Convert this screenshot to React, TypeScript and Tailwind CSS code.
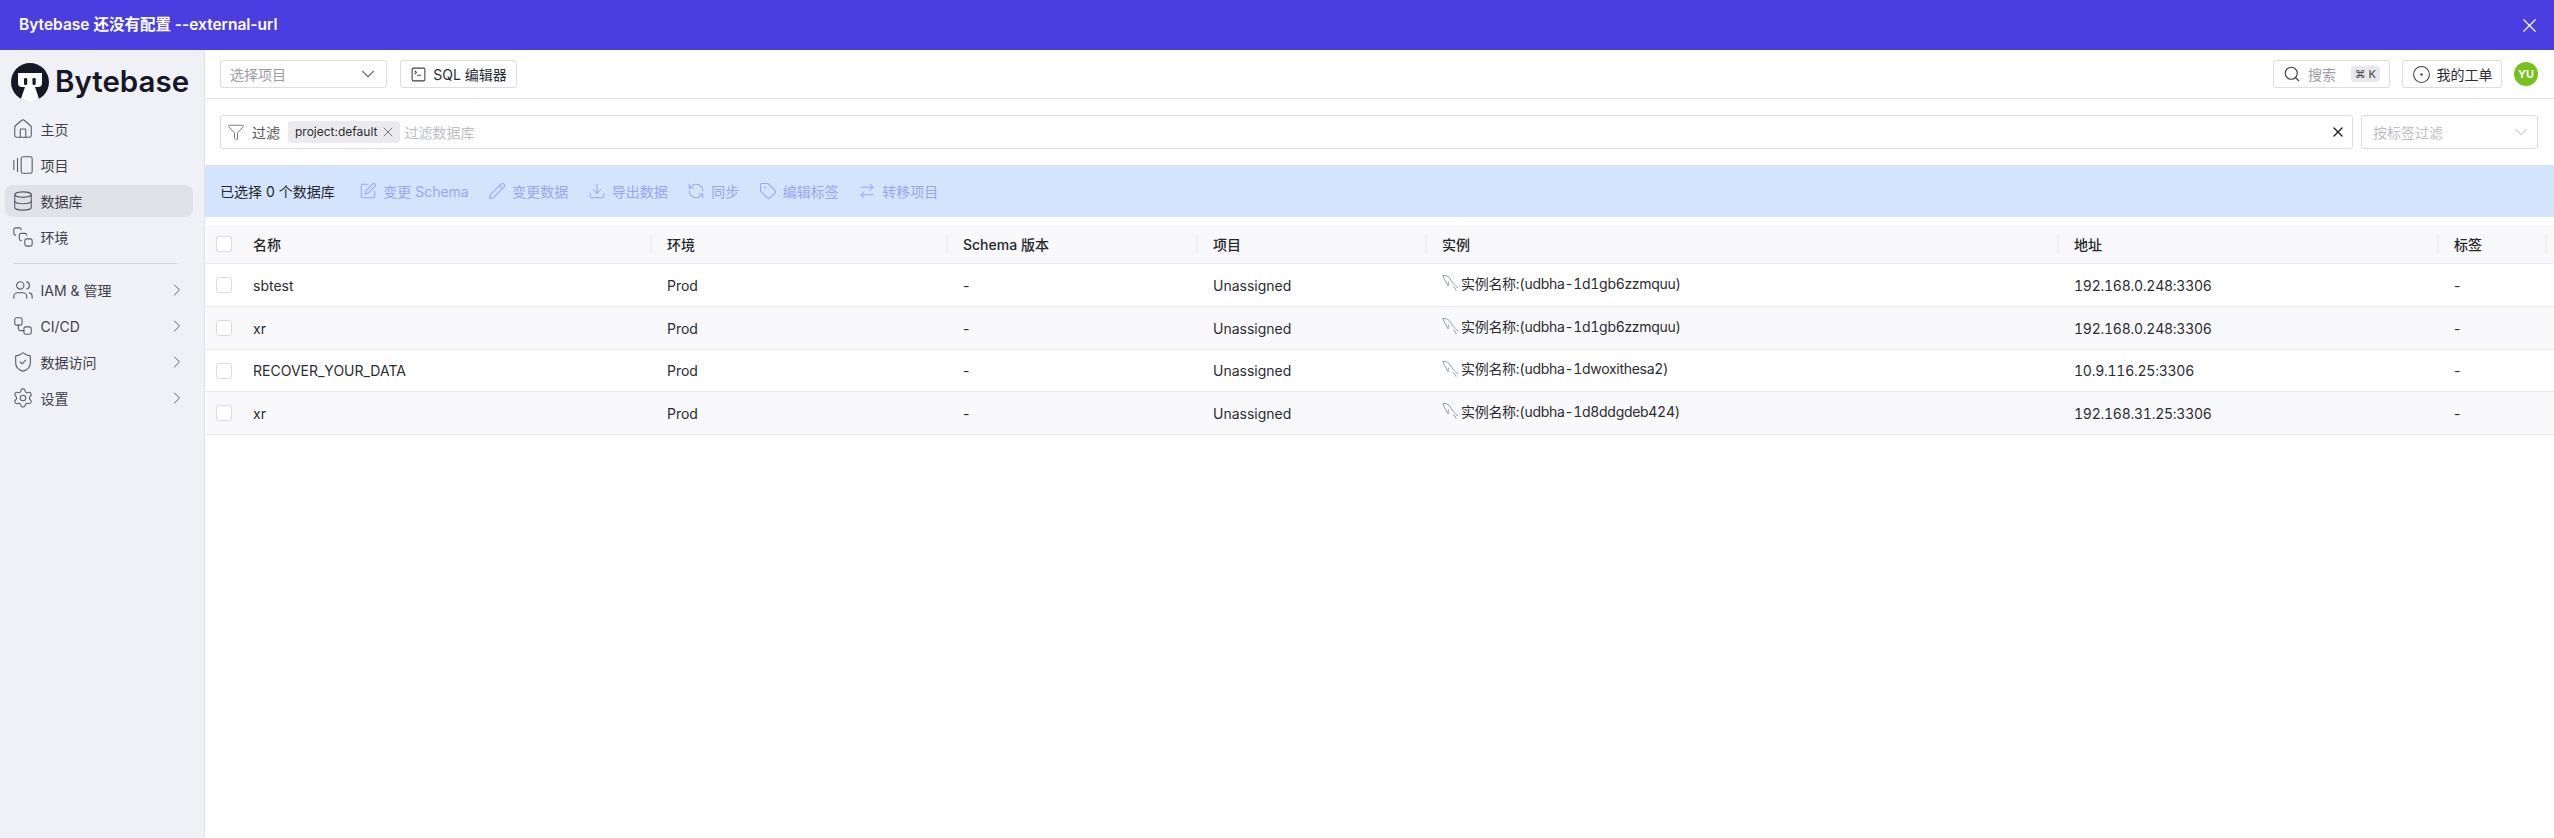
import React from 'react';
import {
    House, GalleryHorizontalEnd, Database, SquareStack, Users, Workflow, ShieldCheck, Settings,
    ChevronRight, ChevronDown, SquareTerminal, Search, CircleDot, Funnel, X, SquarePen, Pencil,
    Download, RefreshCcw, Tag, ArrowRightLeft,
} from 'lucide-react';

const navTop = [
    { label: '主页', icon: House },
    { label: '项目', icon: GalleryHorizontalEnd },
    { label: '数据库', icon: Database, active: true },
    { label: '环境', icon: SquareStack },
];

const navBottom = [
    { label: 'IAM & 管理', icon: Users },
    { label: 'CI/CD', icon: Workflow },
    { label: '数据访问', icon: ShieldCheck },
    { label: '设置', icon: Settings },
];

const actions = [
    { label: '变更 Schema', icon: SquarePen },
    { label: '变更数据', icon: Pencil },
    { label: '导出数据', icon: Download },
    { label: '同步', icon: RefreshCcw },
    { label: '编辑标签', icon: Tag },
    { label: '转移项目', icon: ArrowRightLeft },
];

const rows = [
    { name: 'sbtest', instance: '实例名称:(udbha-1d1gb6zzmquu)', address: '192.168.0.248:3306', h: 'h-[43px]' },
    { name: 'xr', instance: '实例名称:(udbha-1d1gb6zzmquu)', address: '192.168.0.248:3306', h: 'h-[43px]' },
    { name: 'RECOVER_YOUR_DATA', instance: '实例名称:(udbha-1dwoxithesa2)', address: '10.9.116.25:3306', h: 'h-[42px]' },
    { name: 'xr', instance: '实例名称:(udbha-1d8ddgdeb424)', address: '192.168.31.25:3306', h: 'h-[43px]' },
];

const columns = ['名称', '环境', 'Schema 版本', '项目', '实例', '地址', '标签'];

const gridCols = 'grid grid-cols-[33px_414px_296px_250px_229px_632px_380px_108px_7px]';

const Logo = () => (
    <svg viewBox="0 0 38 38" className="w-[38px] h-[38px] shrink-0">
        <circle cx="19" cy="19" r="19" fill="#161827" />
        <path d="M7 10H31V20Q31 24 27 24H24L28 35.800A19 19 0 0 1 10 35.800L14 24H11Q7 24 7 20Z" fill="#fff" />
        <rect x="13" y="15" width="3.200" height="7" rx="1.200" fill="#161827" />
        <rect x="21.500" y="15" width="3.200" height="7" rx="1.200" fill="#161827" />
    </svg>
);

const MysqlIcon = () => (
    <svg viewBox="0 0 18 18" className="w-[18px] h-[18px] shrink-0" fill="none" stroke="#7f9fb3" strokeWidth="1" strokeLinecap="round" strokeLinejoin="round">
        <path d="M1 1.500c2.500-.5 4.500.3 6.200 2.200 1.700 1.900 2.800 4.300 4.300 6 1.100 1.200 2.500 2.600 4.500 4.300" />
        <path d="M1 1.500c.8 3 1.700 4.700 3.200 6.500 .6 2 1.200 3 2 3.800-.2-1.500-.1-2.600 .3-3.800" />
        <path d="M11.500 13c1 .4 2 1.300 2.500 3.500" />
    </svg>
);

const Checkbox = () => <span className="block w-4 h-4 rounded-[3px] border border-[#d9d9e0] bg-white" />;

const App = () => {
    return (
        <div className="h-screen w-full flex flex-col overflow-hidden bg-white text-[14px] text-[#2b2c33] font-['Inter','Noto_Sans_CJK_SC',sans-serif]">
            <div className="h-[50px] shrink-0 bg-[#4a3ee0] text-white flex items-center justify-between pl-[19px] pr-[13px]">
                <span className="text-[15.500px] font-semibold">Bytebase 还没有配置 --external-url</span>
                <X className="w-[23px] h-[23px]" strokeWidth={1.2} />
            </div>

            <div className="flex-1 flex min-h-0">
                <aside className="w-[205px] shrink-0 bg-[#f0f1f6] border-r border-[#e2e3ea]">
                    <div className="h-[54px] mt-[5px] pl-[11px] flex items-center gap-[6px]">
                        <Logo />
                        <span className="text-[29.500px] font-semibold text-[#161827] leading-none">Bytebase</span>
                    </div>
                    <nav className="mt-[4px] pl-[5px] pr-[11px]">
                        {navTop.map((item) => (
                            <div key={item.label} className={`h-[32px] mb-[4px] rounded-lg flex items-center pl-[7px] gap-[6.500px] text-[#3d3f4a] ${item.active ? 'bg-[#e1e2e8]' : ''}`}>
                                <item.icon className="w-[22px] h-[22px] text-[#5a5e6b]" strokeWidth={1.2} />
                                <span>{item.label}</span>
                            </div>
                        ))}
                        <div className="h-px bg-[#d3d4db] mx-[8px] w-[164px] mt-[10px] mb-[10px]" />
                        {navBottom.map((item) => (
                            <div key={item.label} className="h-[32px] mb-[4px] flex items-center pl-[7px] pr-[6px] gap-[6.500px] text-[#3d3f4a]">
                                <item.icon className="w-[22px] h-[22px] text-[#5a5e6b]" strokeWidth={1.2} />
                                <span className="flex-1">{item.label}</span>
                                <ChevronRight className="w-[20px] h-[20px] text-[#5a5e6b]" strokeWidth={1.2} />
                            </div>
                        ))}
                    </nav>
                </aside>

                <main className="flex-1 min-w-0 flex flex-col">
                    <header className="h-[49px] shrink-0 border-b border-[#e2e3ea] flex items-center pl-[15px] pr-[16px]">
                        <div className="w-[167px] h-[28px] rounded-[3px] border border-[#dcdce2] flex items-center justify-between pl-[9px] pr-[7px] text-[#9b9ca3]">
                            <span>选择项目</span>
                            <ChevronDown className="w-[22px] h-[22px] text-[#6b6e78]" strokeWidth={1.2} />
                        </div>
                        <div className="ml-[13px] w-[117px] h-[28px] rounded-[3px] border border-[#dcdce2] flex items-center justify-center gap-[6px]">
                            <SquareTerminal className="w-[17px] h-[17px] text-[#3d3f4a]" strokeWidth={1.5} />
                            <span>SQL 编辑器</span>
                        </div>
                        <div className="ml-auto w-[117px] h-[28px] rounded-[3px] border border-[#dcdce2] flex items-center pl-[9px] pr-[9px]">
                            <Search className="w-[18px] h-[18px] text-[#3d3f4a] mr-[7px]" strokeWidth={1.5} />
                            <span className="text-[#9b9ca3]">搜索</span>
                            <span className="ml-auto h-[16px] w-[29px] rounded-[3px] bg-[#e8e8ec] text-[#55565e] text-[11px] font-medium flex items-center justify-center">⌘ K</span>
                        </div>
                        <div className="ml-[12px] w-[100px] h-[28px] rounded-[3px] border border-[#dcdce2] flex items-center justify-center gap-[6px]">
                            <CircleDot className="w-[19px] h-[19px] text-[#3d3f4a]" strokeWidth={1.3} />
                            <span>我的工单</span>
                        </div>
                        <div className="ml-[12px] w-[24px] h-[24px] rounded-full bg-[#76c11f] text-white text-[11px] font-bold flex items-center justify-center">YU</div>
                    </header>

                    <div className="shrink-0 flex gap-[8px] pl-[15px] pr-[16px] pt-[16px]">
                        <div className="flex-1 h-[34px] rounded-[3px] border border-[#dcdce2] flex items-center pl-[6px] pr-[6px]">
                            <Funnel className="w-[18px] h-[18px] text-[#6b6e78] mr-[7px]" strokeWidth={1.2} />
                            <span className="text-[#55565e] mr-[8px]">过滤</span>
                            <span className="h-[22px] bg-[#ebebed] rounded-[3px] flex items-center pl-[7px] pr-[4px] gap-[3px] text-[12px]">
                                project:default
                                <X className="w-[16px] h-[16px] text-[#55565e]" strokeWidth={1.2} />
                            </span>
                            <span className="ml-[4px] text-[#bdbec4]">过滤数据库</span>
                            <X className="ml-auto w-[16px] h-[16px] text-[#26272d]" strokeWidth={2} />
                        </div>
                        <div className="w-[177px] h-[34px] rounded-[3px] border border-[#dcdce2] flex items-center justify-between pl-[11px] pr-[5px] text-[#bdbec4]">
                            <span>按标签过滤</span>
                            <ChevronDown className="w-[22px] h-[22px] text-[#d0d1d6]" strokeWidth={1.2} />
                        </div>
                    </div>

                    <div className="shrink-0 mt-[16px] h-[52px] bg-[#d4e4fc] flex items-center pl-[15px] gap-[19.500px]">
                        <span className="mr-[5px] text-[#26272d]">已选择 0 个数据库</span>
                        {actions.map((a) => (
                            <div key={a.label} className="flex items-center gap-[6px] text-[#9ea3ee]">
                                <a.icon className="w-[18px] h-[18px]" strokeWidth={1.4} />
                                <span>{a.label}</span>
                            </div>
                        ))}
                    </div>

                    <div className="mt-[8px]">
                        <div className={`${gridCols} h-[39px] bg-[#f9f9fb] border-b border-[#e9e9f0] font-medium text-[#26272d]`}>
                            <div className="flex items-center pl-[11px]"><Checkbox /></div>
                            {columns.map((c) => (
                                <div key={c} className="flex items-center justify-between pl-[15px]">
                                    <span>{c}</span>
                                    <span className="w-[2px] h-[18px] bg-[#eeeef3]" />
                                </div>
                            ))}
                            <div />
                        </div>
                        {rows.map((r, i) => (
                            <div key={i} className={`${gridCols} ${r.h} border-b border-[#e9e9f0] ${i % 2 ? 'bg-[#f9f9fb]' : 'bg-white'}`}>
                                <div className="flex items-center pl-[11px]"><Checkbox /></div>
                                <div className="flex items-center pl-[15px]">{r.name}</div>
                                <div className="flex items-center pl-[15px]">Prod</div>
                                <div className="flex items-center pl-[15px]">-</div>
                                <div className="flex items-center pl-[15px]">Unassigned</div>
                                <div className="flex items-center pl-[15px] pb-[4px] gap-[1px] tabular-nums tracking-[-0.3px]">
                                    <MysqlIcon />
                                    {r.instance}
                                </div>
                                <div className="flex items-center pl-[15px] tabular-nums tracking-[-0.25px]">{r.address}</div>
                                <div className="flex items-center pl-[15px]">-</div>
                                <div />
                            </div>
                        ))}
                    </div>
                </main>
            </div>
        </div>
    );
};

export default App;
